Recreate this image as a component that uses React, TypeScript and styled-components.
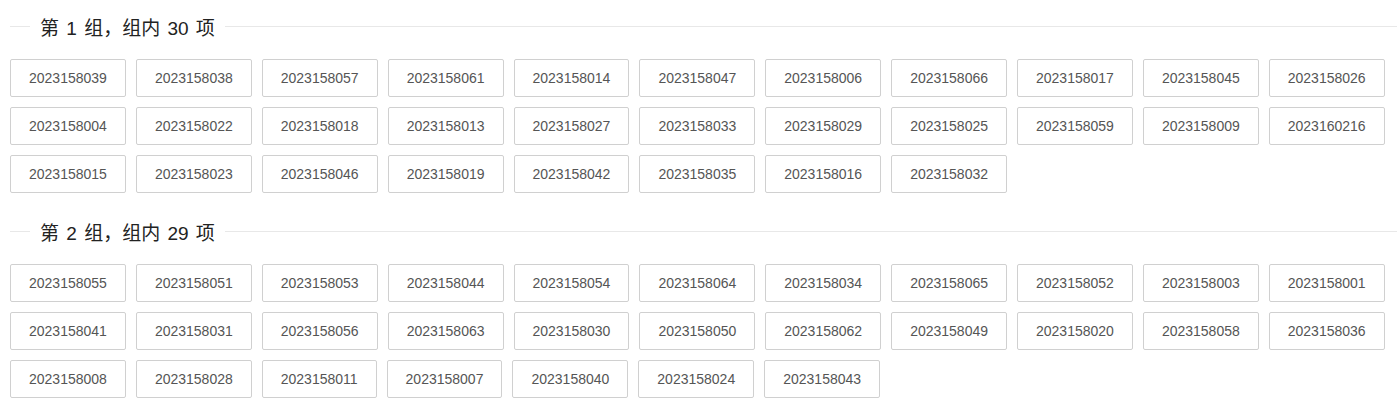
import React from "react";
import styled, { createGlobalStyle } from "styled-components";

const groups: string[][] = [
	[
		"2023158039", "2023158038", "2023158057", "2023158061", "2023158014", "2023158047",
		"2023158006", "2023158066", "2023158017", "2023158045", "2023158026", "2023158004",
		"2023158022", "2023158018", "2023158013", "2023158027", "2023158033", "2023158029",
		"2023158025", "2023158059", "2023158009", "2023160216", "2023158015", "2023158023",
		"2023158046", "2023158019", "2023158042", "2023158035", "2023158016", "2023158032",
	],
	[
		"2023158055", "2023158051", "2023158053", "2023158044", "2023158054", "2023158064",
		"2023158034", "2023158065", "2023158052", "2023158003", "2023158001", "2023158041",
		"2023158031", "2023158056", "2023158063", "2023158030", "2023158050", "2023158062",
		"2023158049", "2023158020", "2023158058", "2023158036", "2023158008", "2023158028",
		"2023158011", "2023158007", "2023158040", "2023158024", "2023158043",
	],
];

const App = () => {
	return (
		<>
			<GlobalStyle />
			<Page>
				{groups.map((items, i) => (
					<Group key={i}>
						<Divider>
							<span>
								第 {i + 1} 组，组内 {items.length} 项
							</span>
						</Divider>
						<Grid>
							{items.map((id) => (
								<Item key={id}>{id}</Item>
							))}
						</Grid>
					</Group>
				))}
			</Page>
		</>
	);
};

export default App;

const GlobalStyle = createGlobalStyle`
	body {
		margin: 0;
		background: #fff;
		font-family: "Liberation Sans", "Noto Sans CJK SC", sans-serif;
	}
`;

const Page = styled.div`
	padding: 0 1px 0 10px;
`;

const Group = styled.section`
	padding-top: 14px;

	& + & {
		padding-top: 26px;
	}
`;

const Divider = styled.div`
	display: flex;
	align-items: center;
	height: 24px;
	margin-bottom: 21px;
	color: #222;
	font-size: 19px;
	white-space: nowrap;

	&::before,
	&::after {
		content: "";
		height: 1px;
		background: #e8e8e8;
	}

	&::before {
		width: 20px;
	}

	&::after {
		flex: 1;
	}

	span {
		padding: 0 10px;
		word-spacing: 2px;
	}
`;

const Grid = styled.div`
	display: flex;
	flex-wrap: wrap;
	gap: 10px 10px;
`;

const Item = styled.button`
	height: 38px;
	padding: 0 18px;
	background: #fff;
	border: 1px solid #d0d0d0;
	border-radius: 2px;
	color: #555;
	font-family: "Liberation Sans", Arial, sans-serif;
	font-size: 14px;
	cursor: pointer;
`;
